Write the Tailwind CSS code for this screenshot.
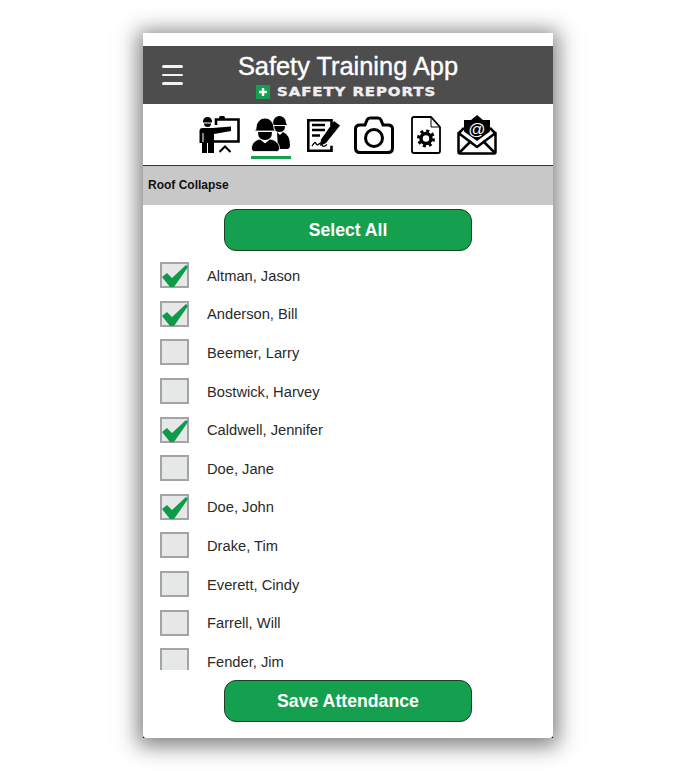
<!DOCTYPE html>
<html lang="en">
<head>
  <meta charset="UTF-8">
  <title>Safety Training App</title>
  <script src="https://cdn.jsdelivr.net/npm/@tailwindcss/browser@4"></script>
</head>
<body class="bg-white font-['Liberation_Sans',Arial,sans-serif] h-[771px] overflow-hidden pt-[33px]">

  <!-- PHONE FRAME -->
  <div class="mx-auto w-[410px] h-[705px] bg-black shadow-[0_3px_20px_5px_rgba(0,0,0,0.5)]">
    <div class="h-full bg-white rounded-b-[3px] flex flex-col pt-[13px]">

      <!-- HEADER -->
      <div class="h-[58px] shrink-0 bg-[#4d4d4d] grid grid-cols-[1fr_auto_1fr] items-start">
        <div class="pl-[19px] pt-[19px] flex flex-col gap-[6px]">
          <span class="block w-[21px] h-[2.5px] bg-[#f2f2f2] rounded-full"></span>
          <span class="block w-[21px] h-[2.5px] bg-[#f2f2f2] rounded-full"></span>
          <span class="block w-[21px] h-[2.5px] bg-[#f2f2f2] rounded-full"></span>
        </div>
        <div class="flex flex-col items-center">
          <div class="text-white text-[25.4px] leading-[28px] pt-[6px] whitespace-nowrap [-webkit-text-stroke:0.4px_white]">Safety Training App</div>
          <div class="flex items-center mt-[5px] mr-[5px] h-[14px]">
            <span class="w-[14px] h-[14px] bg-[#14a04e] flex items-center justify-center">
              <svg width="10" height="10" viewBox="0 0 10 10"><path d="M5 1v8M1 5h8" stroke="#fff" stroke-width="2.4"/></svg>
            </span>
            <span class="ml-[7px] w-[158px] origin-left scale-x-[1.15] text-[#f0f0f0] text-[13px] leading-[14px] font-['DejaVu_Sans',sans-serif] font-bold tracking-[0.8px] whitespace-nowrap [-webkit-text-stroke:0.4px_#f0f0f0]">SAFETY REPORTS</span>
          </div>
        </div>
        <div></div>
      </div>

      <!-- TAB ICONS -->
      <div class="h-[62px] shrink-0 border-b border-[#333] flex justify-center items-start pt-[12px]">
        <!-- trainer -->
        <svg width="41" height="38" viewBox="0 0 41 38" fill="none">
          <path d="M17 9V3.500H39.500V25.500H15" stroke="#000" stroke-width="2.600"/>
          <rect x="20" y="0" width="6" height="4" rx="1.500" fill="#000"/>
          <path d="M20.500 36l5.500-5.500 5.500 5.500" stroke="#000" stroke-width="2"/>
          <path d="M4 5.500a4.500 4.500 0 0 1 9 0v1H4z" fill="#000"/>
          <path d="M5 7.500h7q0 3.500-3.500 3.500T5 7.500z" fill="#000"/>
          <path d="M0.500 15q0-3 3-3h10L32 10.500v4.500L15 18V37H9V27H8V37H3V27H0.500z" fill="#000"/>
          <path d="M4 17v9" stroke="#fff" stroke-width="1"/>
        </svg>
        <!-- attendees, active tab -->
        <div class="ml-[11px] -mt-[1px] w-[40px] h-[44px] flex flex-col">
          <svg width="40" height="38" viewBox="0 0 40 38">
            <path d="M22 8a6.500 7 0 0 1 13 0l1 2H20z" fill="#000"/>
            <path d="M23 11h11q0 6-5.500 6T23 11z" fill="#000"/>
            <path d="M26 17l3 3 3-3q7 3 7 13 0 4-3 4H27z" fill="#000"/>
            <path d="M5 13a9 10 0 0 1 18 0v1.500h1V16H4v-1.500h1z" fill="#000" stroke="#fff" stroke-width="0.800"/>
            <path d="M7 17h14q0 8-7 8T7 17z" fill="#000"/>
            <path d="M9 24l5 4 5-4c6 1 9.500 5 9.500 9 0 2-1 3.500-3 3.500H3.500c-2 0-3-1.500-3-3.500 0-4 3.500-8 8.500-9z" fill="#000" stroke="#fff" stroke-width="0.800"/>
          </svg>
          <span class="block h-[3px] mt-[3px] bg-[#14a04e]"></span>
        </div>
        <!-- signed document -->
        <svg width="35" height="36" viewBox="0 0 35 36" fill="none" class="ml-[15px] mt-[2px]">
          <path d="M25.500 8V2.300H2.300v30.400h23.200v-5" stroke="#000" stroke-width="2.600"/>
          <path d="M6 7h13M6 12h13M6 17.500h8" stroke="#000" stroke-width="2.400"/>
          <path d="M6 28q3-5 4-2.500t3 .5 3 1 5-.5" stroke="#000" stroke-width="1.300"/>
          <path d="M28 3l6 4.500L20 25l-6 3 1-6.500z" fill="#000"/>
        </svg>
        <!-- camera -->
        <svg width="40" height="38" viewBox="0 0 40 38" fill="none" class="ml-[13px]">
          <path d="M6 9h5l2-5q1-2 3-2h8q2 0 3 2l2 5h5q4.500 0 4.500 4v19q0 4.500-4.500 4.500H6q-4.500 0-4.500-4.500V13Q1.500 9 6 9z" stroke="#000" stroke-width="3"/>
          <circle cx="20" cy="22" r="8.500" stroke="#000" stroke-width="3"/>
        </svg>
        <!-- document settings -->
        <svg width="30" height="38" viewBox="0 0 30 38" fill="none" class="ml-[17px]">
          <path d="M3 1h17l9 10v24q0 2-2 2H3q-2 0-2-2V3q0-2 2-2z" stroke="#000" stroke-width="1.800"/>
          <path d="M20 1v10h9" stroke="#000" stroke-width="1"/>
          <circle cx="15" cy="22.500" r="5" stroke="#000" stroke-width="3.500"/>
          <circle cx="15" cy="22.500" r="7.500" stroke="#000" stroke-width="3" stroke-dasharray="3 2.890"/>
        </svg>
        <!-- email -->
        <svg width="40" height="40" viewBox="0 0 40 40" fill="none" class="ml-[16px] -mt-[1px]">
          <path d="M20 0l6 5h7v11.500L20 26 7 16.500V5h7z" fill="#000"/>
          <path d="M2 18l5-5M38 18l-5-5" stroke="#000" stroke-width="2.500"/>
          <path d="M1.500 18v19q0 1.500 1.500 1.500h34q1.500 0 1.500-1.500V18L20 32z" stroke="#000" stroke-width="2.500" stroke-linejoin="round"/>
          <path d="M2 38l12-12M38 38L26 26" stroke="#000" stroke-width="2.500"/>
          <text x="20" y="20" text-anchor="middle" fill="#fff" font-size="17" font-family="Liberation Sans">@</text>
        </svg>
      </div>

      <!-- TRAINING NAME -->
      <div class="h-[39px] shrink-0 bg-[#c8c8c8] flex items-center pl-[5px] pb-[2px] text-[12px] font-bold text-[#111]">Roof Collapse</div>

      <!-- SELECT ALL -->
      <div class="pt-[4px] flex justify-center shrink-0">
        <button class="w-[248px] h-[42px] pt-[1px] bg-[#14a04e] border border-[#1c3f2a] rounded-[12px] text-white font-bold text-[17.6px]">Select All</button>
      </div>

      <!-- ATTENDEES -->
      <div class="mt-[5px] h-[414px] shrink-0 overflow-hidden pl-[17px] text-[14.7px] text-[#2a2a2a]">
        <div class="h-[38.6px] flex items-center">
          <span class="relative w-[29px] h-[26px] bg-[#e6e7e7] border-2 border-[#a4a4a4]">
            <svg width="29" height="26" viewBox="0 0 29 26" class="absolute -left-[2px] -top-[2px]"><path d="M2 15l5-4 5 5L26 3l2 2-14 20h-4z" fill="#0f9a4a"/></svg>
          </span>
          <span class="ml-[18px] mt-[1px]">Altman, Jason</span>
        </div>
        <div class="h-[38.6px] flex items-center">
          <span class="relative w-[29px] h-[26px] bg-[#e6e7e7] border-2 border-[#a4a4a4]">
            <svg width="29" height="26" viewBox="0 0 29 26" class="absolute -left-[2px] -top-[2px]"><path d="M2 15l5-4 5 5L26 3l2 2-14 20h-4z" fill="#0f9a4a"/></svg>
          </span>
          <span class="ml-[18px] mt-[1px]">Anderson, Bill</span>
        </div>
        <div class="h-[38.6px] flex items-center">
          <span class="w-[29px] h-[26px] bg-[#e6e7e7] border-2 border-[#a4a4a4]"></span>
          <span class="ml-[18px] mt-[1px]">Beemer, Larry</span>
        </div>
        <div class="h-[38.6px] flex items-center">
          <span class="w-[29px] h-[26px] bg-[#e6e7e7] border-2 border-[#a4a4a4]"></span>
          <span class="ml-[18px] mt-[1px]">Bostwick, Harvey</span>
        </div>
        <div class="h-[38.6px] flex items-center">
          <span class="relative w-[29px] h-[26px] bg-[#e6e7e7] border-2 border-[#a4a4a4]">
            <svg width="29" height="26" viewBox="0 0 29 26" class="absolute -left-[2px] -top-[2px]"><path d="M2 15l5-4 5 5L26 3l2 2-14 20h-4z" fill="#0f9a4a"/></svg>
          </span>
          <span class="ml-[18px] mt-[1px]">Caldwell, Jennifer</span>
        </div>
        <div class="h-[38.6px] flex items-center">
          <span class="w-[29px] h-[26px] bg-[#e6e7e7] border-2 border-[#a4a4a4]"></span>
          <span class="ml-[18px] mt-[1px]">Doe, Jane</span>
        </div>
        <div class="h-[38.6px] flex items-center">
          <span class="relative w-[29px] h-[26px] bg-[#e6e7e7] border-2 border-[#a4a4a4]">
            <svg width="29" height="26" viewBox="0 0 29 26" class="absolute -left-[2px] -top-[2px]"><path d="M2 15l5-4 5 5L26 3l2 2-14 20h-4z" fill="#0f9a4a"/></svg>
          </span>
          <span class="ml-[18px] mt-[1px]">Doe, John</span>
        </div>
        <div class="h-[38.6px] flex items-center">
          <span class="w-[29px] h-[26px] bg-[#e6e7e7] border-2 border-[#a4a4a4]"></span>
          <span class="ml-[18px] mt-[1px]">Drake, Tim</span>
        </div>
        <div class="h-[38.6px] flex items-center">
          <span class="w-[29px] h-[26px] bg-[#e6e7e7] border-2 border-[#a4a4a4]"></span>
          <span class="ml-[18px] mt-[1px]">Everett, Cindy</span>
        </div>
        <div class="h-[38.6px] flex items-center">
          <span class="w-[29px] h-[26px] bg-[#e6e7e7] border-2 border-[#a4a4a4]"></span>
          <span class="ml-[18px] mt-[1px]">Farrell, Will</span>
        </div>
        <div class="h-[38.6px] flex items-center">
          <span class="w-[29px] h-[26px] bg-[#e6e7e7] border-2 border-[#a4a4a4]"></span>
          <span class="ml-[18px] mt-[1px]">Fender, Jim</span>
        </div>
      </div>

      <!-- SAVE -->
      <div class="pt-[10px] flex justify-center shrink-0">
        <button class="w-[248px] h-[42px] pt-[1px] bg-[#14a04e] border border-[#1c3f2a] rounded-[12px] text-white font-bold text-[17.7px]">Save Attendance</button>
      </div>
    </div>
  </div>

</body>
</html>
